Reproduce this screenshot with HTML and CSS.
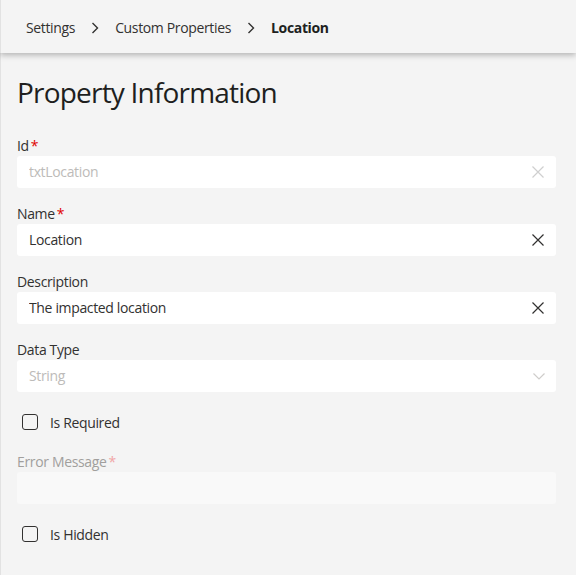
FILE: index.html
```html
<!DOCTYPE html>
<html lang="en">
<head>
    <meta charset="UTF-8">
    <meta name="viewport" content="width=device-width, initial-scale=1.0">
    <title>Location - Custom Properties</title>
    <link rel="stylesheet" href="styles.css">
</head>
<body>
    <header class="topbar">
        <nav class="breadcrumb">
            <a class="crumb" href="#">Settings</a>
            <svg class="crumb-sep" viewBox="0 0 8 12"><path d="M1.5 1 L6.5 6 L1.5 11"/></svg>
            <a class="crumb" href="#">Custom Properties</a>
            <svg class="crumb-sep" viewBox="0 0 8 12"><path d="M1.5 1 L6.5 6 L1.5 11"/></svg>
            <span class="crumb current">Location</span>
        </nav>
    </header>

    <main class="panel">
        <h1 class="title">Property Information</h1>

        <div class="field">
            <label class="field-label" for="propId">Id<span class="req">*</span></label>
            <div class="input-wrap disabled">
                <input class="input" id="propId" type="text" value="txtLocation" disabled>
                <svg class="clear" viewBox="0 0 12 12"><path d="M0.5 0.5 L11.5 11.5 M11.5 0.5 L0.5 11.5"/></svg>
            </div>
        </div>

        <div class="field">
            <label class="field-label" for="propName">Name<span class="req">*</span></label>
            <div class="input-wrap">
                <input class="input" id="propName" type="text" value="Location">
                <svg class="clear" viewBox="0 0 12 12"><path d="M0.5 0.5 L11.5 11.5 M11.5 0.5 L0.5 11.5"/></svg>
            </div>
        </div>

        <div class="field">
            <label class="field-label" for="propDesc">Description</label>
            <div class="input-wrap">
                <input class="input" id="propDesc" type="text" value="The impacted location">
                <svg class="clear" viewBox="0 0 12 12"><path d="M0.5 0.5 L11.5 11.5 M11.5 0.5 L0.5 11.5"/></svg>
            </div>
        </div>

        <div class="field">
            <label class="field-label">Data Type</label>
            <div class="input-wrap disabled">
                <span class="input select-value">String</span>
                <svg class="caret" viewBox="0 0 12 7"><path d="M0.5 0.5 L6 6 L11.5 0.5"/></svg>
            </div>
        </div>

        <label class="check">
            <span class="check-box"></span>
            <span class="check-label">Is Required</span>
        </label>

        <div class="field">
            <label class="field-label muted">Error Message<span class="req">*</span></label>
            <div class="input-wrap off">
                <input class="input" type="text" value="" disabled>
            </div>
        </div>

        <label class="check">
            <span class="check-box"></span>
            <span class="check-label">Is Hidden</span>
        </label>
    </main>
</body>
</html>
```

FILE: styles.css
```css
body {
    margin: 0;
    font-family: "Open Sans", "Noto Sans", Arial, sans-serif;
    font-size: 14px;
    letter-spacing: -0.35px;
    color: #323130;
    background-color: #f4f4f4;
}
.topbar {
    position: relative;
    z-index: 1;
    height: 53px;
    background-color: #f4f4f4;
    border-left: 1px solid #e2e2e2;
    box-shadow: 0 2px 6px rgba(0,0,0,0.28);
}
.breadcrumb {
    display: flex;
    align-items: center;
    height: 56px;
    padding-left: 17px;
}
.crumb {
    padding: 0 8px;
    color: #323130;
    text-decoration: none;
    line-height: 20px;
}
.crumb.current {
    font-weight: 700;
    color: #201f1e;
}
.crumb-sep {
    width: 8px;
    height: 12px;
    margin: 0 8px;
    fill: none;
    stroke: #323130;
    stroke-width: 1.4;
}
.panel {
    min-height: 522px;
    border-left: 1px solid #e2e2e2;
    padding: 0 20px 0 16px;
}
.title {
    margin: 0;
    padding: 23px 0 28px;
    font-size: 28px;
    font-weight: 400;
    line-height: 32px;
    letter-spacing: -0.8px;
    color: #201f1e;
}
.field {
    margin-bottom: 16px;
}
.field-label {
    display: block;
    line-height: 20px;
    color: #323130;
}
.field-label.muted {
    color: #a19f9d;
}
.req {
    color: #e00000;
    padding-left: 2px;
}
.muted .req {
    color: #f1a6a6;
}
.input-wrap {
    display: flex;
    align-items: center;
    height: 32px;
    background-color: #fff;
    border-radius: 3px;
}
.input-wrap.off {
    background-color: #f9f9f9;
}
.input {
    flex: 1;
    min-width: 0;
    height: 32px;
    padding: 0 12px;
    border: none;
    background: transparent;
    font: inherit;
    letter-spacing: inherit;
    line-height: 32px;
    color: #323130;
    outline: none;
}
.disabled .input {
    color: #bdbbb9;
}
.clear {
    width: 12px;
    height: 12px;
    margin-right: 12px;
    fill: none;
    stroke: #323130;
    stroke-width: 1.2;
}
.disabled .clear {
    stroke: #cfcfcf;
}
.caret {
    width: 12px;
    height: 7px;
    margin-right: 11px;
    fill: none;
    stroke: #cfcdcb;
    stroke-width: 1.2;
}
.check {
    display: flex;
    align-items: center;
    height: 20px;
    margin: 20px 0;
    padding-left: 5px;
}
.check-box {
    width: 14px;
    height: 14px;
    border: 1px solid #323130;
    border-radius: 3px;
    background-color: #f4f4f4;
}
.check-label {
    margin-left: 12px;
    color: #323130;
}
```
